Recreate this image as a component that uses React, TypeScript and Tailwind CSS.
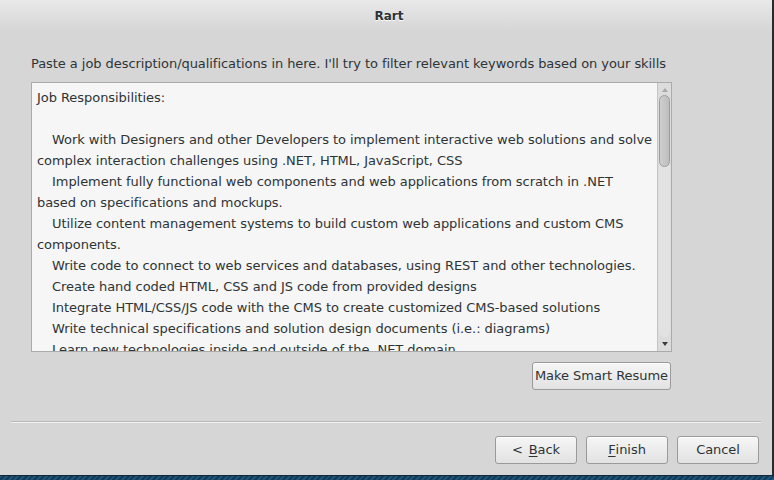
const font = "font-['DejaVu_Sans',sans-serif]"

const lines: { text: string; indent?: boolean }[] = [
  { text: "Job Responsibilities:" },
  { text: "" },
  { text: "Work with Designers and other Developers to implement interactive web solutions and solve", indent: true },
  { text: "complex interaction challenges using .NET, HTML, JavaScript, CSS" },
  { text: "Implement fully functional web components and web applications from scratch in .NET", indent: true },
  { text: "based on specifications and mockups." },
  { text: "Utilize content management systems to build custom web applications and custom CMS", indent: true },
  { text: "components." },
  { text: "Write code to connect to web services and databases, using REST and other technologies.", indent: true },
  { text: "Create hand coded HTML, CSS and JS code from provided designs", indent: true },
  { text: "Integrate HTML/CSS/JS code with the CMS to create customized CMS-based solutions", indent: true },
  { text: "Write technical specifications and solution design documents (i.e.: diagrams)", indent: true },
  { text: "Learn new technologies inside and outside of the .NET domain", indent: true },
]

function Button({ children, className = "" }: { children: React.ReactNode; className?: string }) {
  return (
    <button
      type="button"
      className={`flex h-[28px] items-center justify-center rounded-[3px] border border-[#9a9a9a] bg-gradient-to-b from-[#f6f6f6] to-[#e2e2e2] text-[13px] tracking-[-0.05px] text-[#2e3436] shadow-[inset_0_1px_0_#ffffff] ${className}`}
    >
      {children}
    </button>
  )
}

function Scrollbar() {
  return (
    <div className="flex w-[14px] shrink-0 flex-col items-center border-l border-[#c4c4c4] bg-[#dcdcdc]">
      <svg width="8" height="6" viewBox="0 0 8 6" className="mt-[4px]">
        <path d="M4 1 L7 5 L1 5 Z" fill="#a8a8a8" />
      </svg>
      <div className="mt-[2px] flex w-[11px] flex-1 flex-col rounded-full bg-[#e2e2e2]">
        <div className="h-[72px] rounded-full border border-[#9c9c9c] bg-gradient-to-r from-[#cfcfcf] to-[#bdbdbd]" />
      </div>
      <svg width="8" height="6" viewBox="0 0 8 6" className="mb-[4px] mt-[4px]">
        <path d="M1 1 L7 1 L4 5 Z" fill="#3c3c3c" />
      </svg>
    </div>
  )
}

export default function App() {
  return (
    <div className={`flex h-[480px] w-[774px] flex-col overflow-hidden bg-[#163f5e] ${font}`}>
      <div className="flex h-[475px] shrink-0">
        <div className="flex w-[772px] flex-col bg-[#d6d6d6] text-[#2e3436]">
          <div className="flex h-[31px] shrink-0 items-center justify-center bg-gradient-to-b from-[#e9e9e9] to-[#d6d6d6]">
            <span className="ml-[6px] text-[12px] font-bold text-[#2e3436] [text-shadow:0_1px_0_#ffffff]">Rart</span>
          </div>

          <div className="flex flex-1 flex-col px-[31px]">
            <p className="mt-[25px] text-[13px] leading-[16px] tracking-[-0.06px]">
              Paste a job description/qualifications in here. I'll try to filter relevant keywords based on your skills
            </p>

            <div className="mt-[10px] flex h-[270px] w-[641px] border border-[#ababab] bg-[#f6f6f6]">
              <div className="flex-1 overflow-hidden pl-[5px] pt-[4px] text-[13px] leading-[21px] tracking-[-0.05px]">
                {lines.map((line, i) => (
                  <div key={i} className={`h-[21px] whitespace-pre ${line.indent ? "pl-[15px]" : ""}`}>
                    {line.text}
                  </div>
                ))}
              </div>
              <Scrollbar />
            </div>

            <div className="mt-[10px] flex w-[640px] justify-end">
              <Button className="w-[139px]">Make Smart Resume</Button>
            </div>
          </div>

          <div className="mx-[11px] mb-[13px] h-[2px] border-t border-[#b8b8b8] bg-[#f2f2f2]" />

          <div className="mb-[11px] flex justify-end gap-[9px] pr-[13px]">
            <Button className="w-[82px]">
              &lt;<span className="ml-[6px] underline underline-offset-2">B</span>ack
            </Button>
            <Button className="w-[82px]">
              <span className="underline underline-offset-2">F</span>inish
            </Button>
            <Button className="w-[82px]">Cancel</Button>
          </div>
        </div>
        <div className="w-[2px] bg-[#2a2a2a]" />
      </div>
      <div className="h-[5px] border-t border-[#10283a] bg-[repeating-linear-gradient(135deg,#1e5479_0px,#1e5479_2px,#133b58_2px,#133b58_4px)]" />
    </div>
  )
}
